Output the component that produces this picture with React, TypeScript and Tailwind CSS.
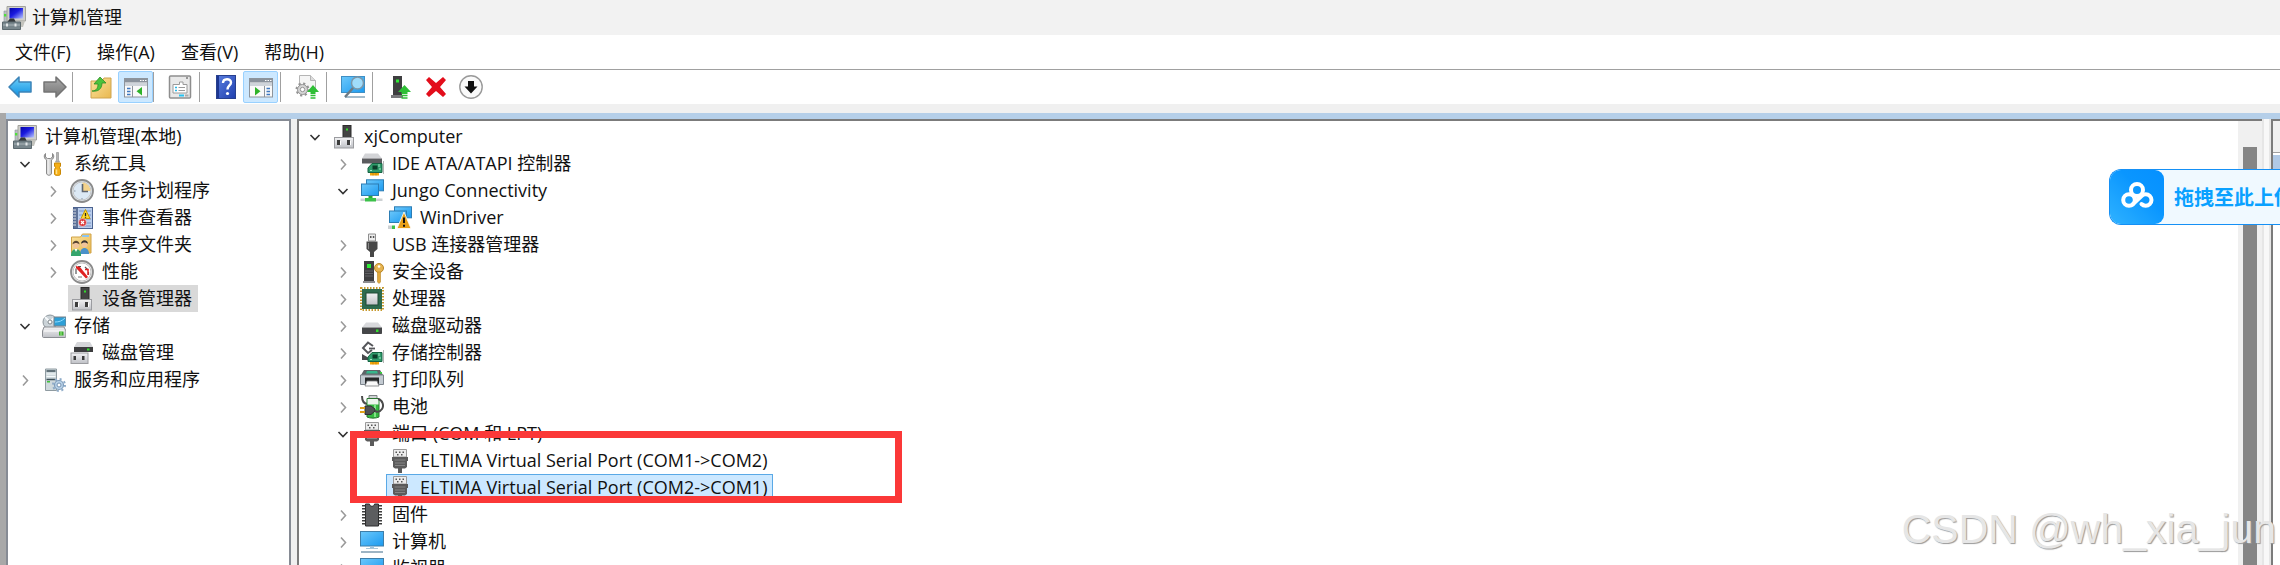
import React, { useState } from "react";

type IconName =
  | "mmc" | "tools" | "clock" | "event" | "shared" | "perf" | "device" | "storage" | "disk" | "services"
  | "ide" | "network" | "netWarn" | "usb" | "security" | "cpu" | "drive" | "storageCtl" | "printer"
  | "battery" | "port" | "firmware" | "monitor"
  | "back" | "forward" | "upFolder" | "paneLeft" | "props" | "help" | "paneRight" | "update"
  | "scan" | "enable" | "remove" | "down";

const GradientDefs = () => (
  <svg width="0" height="0" className="absolute" aria-hidden="true">
    <defs>
      <linearGradient id="screen" x1="0" y1="0" x2="1" y2="1">
        <stop offset="0" stopColor="#6cc8fb" />
        <stop offset="1" stopColor="#1b9af0" />
      </linearGradient>
      <linearGradient id="navy" x1="0" y1="0" x2="1" y2="1">
        <stop offset="0" stopColor="#0505a8" />
        <stop offset="0.45" stopColor="#1a1ae0" />
        <stop offset="1" stopColor="#b9c8ff" />
      </linearGradient>
      <linearGradient id="metal" x1="0" y1="0" x2="1" y2="0">
        <stop offset="0" stopColor="#9a9a9a" />
        <stop offset="0.4" stopColor="#efefef" />
        <stop offset="1" stopColor="#a2a2a2" />
      </linearGradient>
      <linearGradient id="grayBody" x1="0" y1="0" x2="0" y2="1">
        <stop offset="0" stopColor="#f2f2f4" />
        <stop offset="1" stopColor="#bfc1c6" />
      </linearGradient>
      <linearGradient id="folder" x1="0" y1="0" x2="1" y2="1">
        <stop offset="0" stopColor="#fbe3a0" />
        <stop offset="1" stopColor="#e9b84f" />
      </linearGradient>
      <linearGradient id="blueArrow" x1="0" y1="0" x2="0" y2="1">
        <stop offset="0" stopColor="#6fd0fa" />
        <stop offset="1" stopColor="#0d8fe0" />
      </linearGradient>
      <linearGradient id="grayArrow" x1="0" y1="0" x2="0" y2="1">
        <stop offset="0" stopColor="#ababab" />
        <stop offset="1" stopColor="#767676" />
      </linearGradient>
      <linearGradient id="helpBlue" x1="0" y1="0" x2="1" y2="1">
        <stop offset="0" stopColor="#5b7fe0" />
        <stop offset="1" stopColor="#1f3fae" />
      </linearGradient>
      <linearGradient id="cloudTile" x1="0" y1="1" x2="1" y2="0">
        <stop offset="0" stopColor="#2fb2ff" />
        <stop offset="0.6" stopColor="#0a96ff" />
        <stop offset="1" stopColor="#0590ff" />
      </linearGradient>
    </defs>
  </svg>
);

const deviceBase = (
  <>
    <rect x="2.5" y="12.5" width="19" height="10.5" fill="url(#grayBody)" stroke="#9b9ca0" />
    <rect x="5" y="15" width="3" height="5" fill="#3c3c3c" />
    <rect x="15" y="15" width="3" height="5" fill="#3c3c3c" />
    <path d="M8 16h1v4H8zM18 16h1v4h-1z" fill="#fff" />
  </>
);

const greenCard = (
  <>
    <path d="M8 16l4-4.500h10V20.500H8z" fill="#2f9c6b" stroke="#156242" />
    <rect x="12.5" y="13.5" width="5" height="4" fill="#0d3d2b" />
    <path d="M10 18.500h2M19 12v3M19 17h2" stroke="#a4e5c6" />
    <path d="M23.500 9v13" stroke="#b5b5b5" />
    <path d="M10 21h9v2.500h-9z" fill="#f2a50c" />
    <path d="M13 21v2.500M16 21v2.500" stroke="#b87503" strokeWidth="0.6" />
  </>
);

const screens = (
  <>
    <rect x="6.5" y="0.8" width="17" height="11" fill="url(#screen)" stroke="#2c7db4" />
    <rect x="1.5" y="5" width="17" height="11.5" fill="url(#screen)" stroke="#2c7db4" />
  </>
);

const pane = (
  <>
    <rect x="0.5" y="3.5" width="23" height="18.5" fill="#fafafa" stroke="#8d949c" />
    <path d="M1 4h22v3.500H1z" fill="#8a929c" />
    <path d="M16 5.500h1.500M18.500 5.500H20M21 5.500h1.500" stroke="#fff" />
    <path d="M1 8h22v3H1z" fill="#cfd4da" />
  </>
);

const icons: Record<IconName, React.ReactNode> = {
  mmc: (
    <>
      <path d="M2 5h5v12H2z" fill="#b8bec2" stroke="#8c9498" strokeWidth="0.6" />
      <rect x="2" y="8" width="2.5" height="2.5" fill="#4fe03a" />
      <path d="M5 0.500h18.500v14.500H5z" fill="#cfcfcb" stroke="#a2a29c" />
      <path d="M7.500 2h13.500v10.500H7.500z" fill="url(#navy)" />
      <path d="M19 15h4l-2 6h-3z" fill="#c3c3bd" />
      <path d="M5 16.500l3-4h4l2 4z" fill="#33373a" />
      <path d="M0.500 16h18v7.500H0.500z" fill="#78868c" stroke="#5b686e" />
      <path d="M1 19h17" stroke="#a9b4b8" />
      <path d="M4 17.500h2v3H4zM12.500 17.500h2v3h-2z" fill="#e2e6e8" />
    </>
  ),
  tools: (
    <>
      <path d="M3.500 1.500c-2 2-1.500 5 1 6.500V21c0 3 5 3 5 0V8c2.500-1.500 3-4.500 1-6.500V5L8.500 6.500h-3L3.500 5z" fill="url(#metal)" stroke="#8a8a8a" />
      <path d="M14.500 0.500h2V8l1 2h-4l1-2z" fill="#b5b5b5" stroke="#8a8a8a" strokeWidth="0.6" />
      <path d="M12.500 11h6v3l-1 1.500 1 2V22c0 2-6 2-6 0v-4.500l1-2-1-1.500z" fill="#f5ae16" stroke="#c98806" />
      <path d="M14.500 17.500V22" stroke="#ffe08a" strokeWidth="1.5" />
    </>
  ),
  clock: (
    <>
      <circle cx="12" cy="12" r="11" fill="#dfe7ee" stroke="#8b8b8b" strokeWidth="1.8" />
      <circle cx="12" cy="12" r="9" fill="#dce9f5" stroke="#c6c6c6" />
      <path d="M12.500 3.500a8.500 8.500 0 0 1 8 8.500h-8z" fill="#f3d28b" />
      <path d="M12.500 5v7.500H18" fill="none" stroke="#5f6670" strokeWidth="1.6" />
      <path d="M12 19v1.500M4 12h1.500" stroke="#8d99a6" />
    </>
  ),
  event: (
    <>
      <rect x="3.5" y="1.5" width="19" height="21" fill="#b9cdec" stroke="#4b628f" />
      <path d="M4 2h4v20H4z" fill="#5f7399" />
      <path d="M2 4h4M2 7h4M2 10h4M2 13h4M2 16h4M2 19h4" stroke="#dcdfe6" />
      <path d="M9 5h12M9 9h12M9 13h12M9 17h12M9 20h12" stroke="#7c96c4" />
      <path d="M15.500 3.500l4.500 9h-9z" fill="#ffd92e" stroke="#c79a00" />
      <path d="M15.500 7v3M15.500 10.800v1" stroke="#222" strokeWidth="1.3" />
      <circle cx="12.5" cy="16.5" r="4" fill="#db3b3b" stroke="#fff" strokeWidth="0.5" />
      <path d="M11 15l3 3M14 15l-3 3" stroke="#fff" strokeWidth="1.2" />
    </>
  ),
  shared: (
    <>
      <path d="M1.500 4h9l2-3H21v19H1.500z" fill="url(#folder)" stroke="#d0a246" />
      <path d="M12 2h7v2h-7z" fill="#8dc4ee" />
      <circle cx="14.5" cy="11.5" r="3" fill="#f0c49b" />
      <path d="M11 11c0-5 7-5 7 0-2-2-5-2-7 0z" fill="#3b3530" />
      <path d="M10 21c0-8 9-8 9 0z" fill="#4a91c9" />
      <circle cx="6" cy="12" r="3.2" fill="#f0c49b" />
      <path d="M2.500 11.500c0-5 7-5 7 0-2-2-5-2-7 0z" fill="#5b4632" />
      <path d="M1 22c0-8 10-8 10 0v1H1z" fill="#35a56c" />
      <path d="M4.500 16l1.500 3 1.500-3" fill="#fff" />
    </>
  ),
  perf: (
    <>
      <circle cx="12" cy="12" r="11" fill="#f4f4f4" stroke="#8b8b8b" strokeWidth="1.8" />
      <circle cx="12" cy="12" r="9" fill="#fff" stroke="#c0c0c0" />
      <path d="M6 14V8.500M8 6.500h3M15 7l3 3M18.500 12v3" stroke="#555" strokeWidth="1.2" />
      <path d="M6 6l4 1 8 10-2 1.500L6 8z" fill="#e02222" />
      <path d="M15 9.500h3V15" fill="none" stroke="#e02222" strokeWidth="1.5" />
      <path d="M8 17h4" stroke="#777" />
    </>
  ),
  device: (
    <>
      <rect x="11" y="0.5" width="8" height="13" fill="#434343" stroke="#2c2c2c" />
      <rect x="14" y="3.5" width="2" height="2" fill="#33dd2d" />
      {deviceBase}
    </>
  ),
  storage: (
    <>
      <circle cx="8" cy="8" r="7" fill="#cbd3d8" stroke="#8d969c" />
      <path d="M8 8L3 3M8 8l5-5" stroke="#f6f9fb" strokeWidth="2" />
      <circle cx="8" cy="8" r="2" fill="#fff" stroke="#7e868b" />
      <rect x="12" y="3" width="12" height="9" fill="#2e9fd6" stroke="#79828a" />
      <path d="M13 8c4 0 7-1 10-4" stroke="#8fdcff" fill="none" />
      <path d="M2 13h20l2 4v5.500c0 .6-.5 1-1 1H1.500c-.5 0-1-.5-1-1V17z" fill="url(#grayBody)" stroke="#8b8d92" />
      <path d="M2 17h20" stroke="#fff" />
      <rect x="17" y="17.5" width="4.5" height="4" fill="#3fae30" />
      <path d="M19 17.500v4" stroke="#a4f08e" />
    </>
  ),
  disk: (
    <>
      <path d="M7 1h13l3 5H4z" fill="#d5d6d9" />
      <rect x="4" y="6" width="19" height="5" fill="#3d3d3f" />
      <rect x="17" y="7.5" width="2.5" height="2" fill="#33dd2d" />
      <rect x="1" y="12" width="17" height="10.5" fill="url(#grayBody)" stroke="#9b9ca0" />
      <path d="M3.500 15h2.500v4H3.500zM12 15h2.500v4H12z" fill="#3c3c3c" />
    </>
  ),
  services: (
    <>
      <path d="M3.500 1h11v21.500h-11z" fill="#cfd9dd" stroke="#8f9ba1" />
      <path d="M4.500 3h9M4.500 11.500h9" stroke="#3f5058" strokeWidth="1.5" />
      <path d="M4.500 6h9M4.500 8.500h9" stroke="#f7fbfc" strokeWidth="1.2" />
      <rect x="5" y="13" width="3" height="1.5" fill="#3fc23b" />
      <circle cx="17" cy="17" r="4.5" fill="#b8d1e8" stroke="#7f9dbb" strokeWidth="1.2" />
      <circle cx="17" cy="17" r="6" fill="none" stroke="#8eabc8" strokeWidth="2" strokeDasharray="2 2.7" />
      <circle cx="17" cy="17" r="2" fill="#fff" stroke="#7391af" />
    </>
  ),
  ide: (
    <>
      <path d="M5 1.500h13l4 5H2z" fill="#d3d4d7" />
      <path d="M2 6.500h20v5H2z" fill="#5a5b5e" />
      {greenCard}
    </>
  ),
  network: (
    <>
      {screens}
      <path d="M8.500 17h4v3h-4z" fill="#2aa839" />
      <path d="M5 19h11v3.500H5z" fill="#3cc14a" />
      <path d="M0.500 19.500H5V22H0.500zM16 19.500h6.500V22H16z" fill="#cdd1d3" />
    </>
  ),
  netWarn: (
    <>
      {screens}
      <path d="M0 19.500h4V23H0z" fill="#cdd1d3" />
      <path d="M4 19.500h3V23H4z" fill="#3cc14a" />
      <path d="M16 6l7 16.500H9z" fill="#e9a11b" stroke="#fff" strokeWidth="0.8" />
      <path d="M16 11.500v5.500M16 18.700v2" stroke="#111" strokeWidth="2" />
    </>
  ),
  usb: (
    <>
      <path d="M8.500 1h7v7h-7z" fill="#ececec" stroke="#8f8f8f" />
      <path d="M10 3h1.500v2H10zM12.800 3h1.500v2h-1.500z" fill="#555" />
      <path d="M6.500 8.500h11v7.500l-3.500 3v5h-4v-5l-3.500-3z" fill="#474747" />
      <path d="M8.500 10v6" stroke="#8a8a8a" />
    </>
  ),
  security: (
    <>
      <path d="M4 1h10v20H4z" fill="#3e3e40" />
      <rect x="7" y="4" width="4" height="4" fill="#2eea35" />
      <path d="M5 11h8M5 13.500h8M5 16h8" stroke="#626266" />
      <path d="M3 21h12v2H3z" fill="#8c8c8f" />
      <circle cx="19" cy="8" r="4.5" fill="#e6b451" stroke="#b98626" />
      <circle cx="19" cy="6.5" r="1.3" fill="#fff" />
      <path d="M17.500 12h3v10L19 23.500 17.500 22z" fill="#e0a83c" stroke="#b98626" strokeWidth="0.6" />
    </>
  ),
  cpu: (
    <>
      <rect x="1" y="1" width="22" height="22" fill="none" stroke="#c79a2f" strokeWidth="2" strokeDasharray="1.5 1.5" />
      <rect x="2" y="2" width="20" height="20" fill="#2e6b4f" />
      <rect x="6" y="6" width="12" height="12" fill="url(#grayBody)" stroke="#1e4a36" />
    </>
  ),
  drive: (
    <>
      <path d="M6 8.500h12l4 5H2z" fill="#d8d9dc" />
      <path d="M2 13.500h20V19c0 .6-.4 1-1 1H3c-.6 0-1-.4-1-1z" fill="#454648" />
      <rect x="16" y="15.5" width="2.5" height="2.5" fill="#33e02d" />
    </>
  ),
  storageCtl: (
    <>
      <path d="M13 5L8 1.500 3 7l5 5 4-3" fill="none" stroke="#55565a" strokeWidth="2" />
      <path d="M9 7.500h6" stroke="#55565a" strokeWidth="1.8" />
      <path d="M2 13l7 4v2H2z" fill="#47484b" />
      {greenCard}
    </>
  ),
  printer: (
    <>
      <path d="M4 2h16l3 5H1z" fill="#5e6468" />
      <path d="M7 3h10l1 2.500H6z" fill="#36b58c" />
      <path d="M0.500 7h23v9.500h-23z" fill="#c3cad1" stroke="#7c848c" />
      <path d="M5 9.500h14V16H5z" fill="#26282a" />
      <path d="M7 13h10l2 5H5z" fill="#fafafa" stroke="#77797c" strokeWidth="0.8" />
      <rect x="20" y="4" width="2" height="1.5" fill="#35e035" />
    </>
  ),
  battery: (
    <>
      <path d="M2 1c0 5 2 8 6 8" fill="none" stroke="#4b4b4b" strokeWidth="2" />
      <path d="M9 0.500h8v3H9z" fill="#cfd2d4" stroke="#7d8184" />
      <path d="M7 3.500h12V22c-3 1.500-9 1.500-12 0z" fill="#34b93f" stroke="#2a7430" />
      <path d="M7.500 4h11v5.500h-11z" fill="#eef6ee" />
      <path d="M15 10v12" stroke="#9df0a0" strokeWidth="1.5" />
      <path d="M18 4c5 1 6 7 4 10-2 3-5 3-7 2" fill="none" stroke="#4b4b4b" strokeWidth="2" />
      <path d="M5 11h6l4 3v2l-4 3.500H5z" fill="#505254" stroke="#2f3031" />
      <path d="M0 13h5M0 17h5" stroke="#dfa21b" strokeWidth="1.8" />
    </>
  ),
  port: (
    <>
      <path d="M5.500 0.500h13V8h-13z" fill="#ededed" stroke="#9a9a9a" />
      <path d="M7.500 2.500H9V4H7.500zM11 2.500h1.500V4H11zM14.500 2.500H16V4h-1.500zM9 5h1.500v1.500H9zM13 5h1.500v1.500H13z" fill="#555" />
      <path d="M4 8h16v4h-1v6l-2 1.500h-3V24h-4v-4.500H7L5 18v-6H4z" fill="#5b5b5b" />
      <path d="M6.500 11h11M7 14h10M7 16.500h10" stroke="#858585" />
    </>
  ),
  firmware: (
    <>
      <path d="M3.500 2v20M20.500 2v20" stroke="#3d3d3d" strokeWidth="3" strokeDasharray="1.5 1.5" />
      <path d="M5.500 1h4c0 3 5 3 5 0h4v22h-13z" fill="#5c5d5f" stroke="#2d2d2e" />
    </>
  ),
  monitor: (
    <>
      <rect x="0.5" y="1.5" width="23" height="14.5" fill="url(#screen)" stroke="#3f7ea8" />
      <path d="M10 16.500h4v2h-4z" fill="#9cc3de" />
      <path d="M6 18.500h12" stroke="#a9c6d8" />
      <path d="M1 22h22" stroke="#9db4c4" strokeWidth="2" />
    </>
  ),
  back: (
    <path d="M1 12L11 2v5h12v10H11v5z" fill="url(#blueArrow)" stroke="#3c84b8" strokeWidth="1.5" strokeLinejoin="round" />
  ),
  forward: (
    <path d="M23 12L13 2v5H1v10h12v5z" fill="url(#grayArrow)" stroke="#747474" strokeWidth="1.5" strokeLinejoin="round" />
  ),
  upFolder: (
    <>
      <path d="M2 6h11l2-3h7v20H2z" fill="url(#folder)" stroke="#cfa450" />
      <path d="M3 16c5 0 6-4 6-7H5l6-7 6 6h-4c0 6-4 9-10 8z" fill="#4cc23c" stroke="#2f8f26" strokeWidth="0.8" />
    </>
  ),
  paneLeft: (
    <>
      {pane}
      <path d="M8.500 11v11" stroke="#8d949c" />
      <path d="M3 13.500h3.500M3 16.500h3.500M3 19.500h3.500" stroke="#3f78c0" strokeWidth="1.3" />
      <path d="M18 12v8.500l-5.500-4.200z" fill="#2fb32a" />
    </>
  ),
  props: (
    <>
      <rect x="1.5" y="1" width="21" height="22" rx="1" fill="#e9e9e9" stroke="#8e8e8e" strokeWidth="1.5" />
      <path d="M18 3h2" stroke="#444" />
      <path d="M5 9.500V18h14V9.500h-4V7h-3.500v2.500z" fill="#fff" stroke="#9a9a9a" />
      <path d="M7 12.500h2M7 15.500h2" stroke="#26b7e8" strokeWidth="1.5" />
      <path d="M10.500 12.500H17M10.500 15.500H17" stroke="#9a9a9a" />
      <path d="M11 20.500h5" stroke="#27c3f0" strokeWidth="2" />
      <path d="M17 20.500h3.500" stroke="#aaa" strokeWidth="2" />
    </>
  ),
  help: (
    <>
      <rect x="2.5" y="0.5" width="19" height="23" fill="url(#helpBlue)" stroke="#27408f" />
      <path d="M4 1v22" stroke="#1c3690" strokeWidth="2" />
      <path d="M9 8c0-5 8-5 8-.5 0 3-3.500 3-3.500 7" fill="none" stroke="#fff" strokeWidth="2.4" />
      <circle cx="13.5" cy="18.5" r="1.6" fill="#fff" />
    </>
  ),
  paneRight: (
    <>
      {pane}
      <path d="M15.500 11v11" stroke="#8d949c" />
      <path d="M17.500 13.500H21M17.500 16.500H21M17.500 19.500H21" stroke="#3f78c0" strokeWidth="1.3" />
      <path d="M6 12v8.500l5.500-4.200z" fill="#2fb32a" />
    </>
  ),
  update: (
    <>
      <path d="M4.500 0.500h11l5 5V15H4.500z" fill="#f5f5f5" stroke="#b5b5b5" />
      <path d="M15.500 0.500v5h5" fill="#ddd" stroke="#b5b5b5" />
      <circle cx="7.5" cy="14.5" r="5" fill="#d5d5d5" stroke="#949494" />
      <circle cx="7.5" cy="14.5" r="6" fill="none" stroke="#949494" strokeWidth="2" strokeDasharray="2.2 2.5" />
      <circle cx="7.5" cy="14.5" r="2.2" fill="#fff" stroke="#949494" />
      <path d="M18 10l6 7h-3.500v2h-5v-2H12z" fill="#2fbf36" />
      <path d="M15.500 20.500h5M15.500 23h5" stroke="#2fbf36" strokeWidth="1.6" />
    </>
  ),
  scan: (
    <>
      <rect x="0.5" y="1.5" width="23" height="16" fill="url(#screen)" stroke="#3f8fc4" />
      <path d="M4 22h20" stroke="#a5bccb" strokeWidth="2" />
      <circle cx="16.5" cy="8" r="6" fill="#9fdcfb" stroke="#7d97a8" strokeWidth="1.5" />
      <path d="M12 13L4 22" stroke="#6d7b85" strokeWidth="2.5" />
    </>
  ),
  enable: (
    <>
      <path d="M4 1h9v19H4z" fill="#3e3e40" />
      <rect x="7" y="4.5" width="3" height="3" fill="#2eea35" />
      <path d="M2 20h12v3H2z" fill="#77777a" />
      <path d="M15.500 10l6.500 7h-3.500v2h-6v-2H9z" fill="#2fbf36" />
      <path d="M12.500 20.500h6M12.500 23h6" stroke="#2fbf36" strokeWidth="1.6" />
    </>
  ),
  remove: <path d="M2 5l3-3 7 6 7-6 3 3-6 7 6 7-3 3-7-6-7 6-3-3 6-7z" fill="#e30d1b" />,
  down: (
    <>
      <circle cx="12" cy="12" r="11.2" fill="#fafafa" stroke="#9a9a9a" strokeWidth="1.4" />
      <path d="M9 6h6v5.500h3.500L12 18.500 5.500 11.500H9z" fill="#111" />
    </>
  ),
};

const Icon = ({ name }: { name: IconName }) => (
  <svg viewBox="0 0 24 24" className="h-6 w-6 shrink-0" aria-hidden="true">
    {icons[name]}
  </svg>
);

interface TreeRow {
  label: string;
  icon: IconName;
  level: number;
  state?: "open" | "closed";
  selected?: "gray" | "blue";
}

const consoleTree: TreeRow[] = [
  { label: "计算机管理(本地)", icon: "mmc", level: 0 },
  { label: "系统工具", icon: "tools", level: 1, state: "open" },
  { label: "任务计划程序", icon: "clock", level: 2, state: "closed" },
  { label: "事件查看器", icon: "event", level: 2, state: "closed" },
  { label: "共享文件夹", icon: "shared", level: 2, state: "closed" },
  { label: "性能", icon: "perf", level: 2, state: "closed" },
  { label: "设备管理器", icon: "device", level: 2, selected: "gray" },
  { label: "存储", icon: "storage", level: 1, state: "open" },
  { label: "磁盘管理", icon: "disk", level: 2 },
  { label: "服务和应用程序", icon: "services", level: 1, state: "closed" },
];

const deviceTree: TreeRow[] = [
  { label: "xjComputer", icon: "device", level: 1, state: "open" },
  { label: "IDE ATA/ATAPI 控制器", icon: "ide", level: 2, state: "closed" },
  { label: "Jungo Connectivity", icon: "network", level: 2, state: "open" },
  { label: "WinDriver", icon: "netWarn", level: 3 },
  { label: "USB 连接器管理器", icon: "usb", level: 2, state: "closed" },
  { label: "安全设备", icon: "security", level: 2, state: "closed" },
  { label: "处理器", icon: "cpu", level: 2, state: "closed" },
  { label: "磁盘驱动器", icon: "drive", level: 2, state: "closed" },
  { label: "存储控制器", icon: "storageCtl", level: 2, state: "closed" },
  { label: "打印队列", icon: "printer", level: 2, state: "closed" },
  { label: "电池", icon: "battery", level: 2, state: "closed" },
  { label: "端口 (COM 和 LPT)", icon: "port", level: 2, state: "open" },
  { label: "ELTIMA Virtual Serial Port (COM1->COM2)", icon: "port", level: 3 },
  { label: "ELTIMA Virtual Serial Port (COM2->COM1)", icon: "port", level: 3, selected: "blue" },
  { label: "固件", icon: "firmware", level: 2, state: "closed" },
  { label: "计算机", icon: "monitor", level: 2, state: "closed" },
  { label: "监视器", icon: "monitor", level: 2, state: "closed" },
];

const indents = ["-ml-[25px]", "ml-1", "ml-8", "ml-15"];

const Chevron = ({ open }: { open: boolean }) => (
  <svg viewBox="0 0 22 22" className="h-[22px] w-[22px]" fill="none" strokeWidth="1.6" aria-hidden="true">
    {open ? <path d="M6.500 9l4.500 4.500L15.500 9" stroke="#333" /> : <path d="M9 6.500l4.500 5L9 16.500" stroke="#9a9a9a" />}
  </svg>
);

const Tree = ({ rows, name }: { rows: TreeRow[]; name: string }) => {
  const [selected, setSelected] = useState(rows.findIndex((row) => row.selected));
  const tint = rows.find((row) => row.selected)?.selected;
  const selectedStyle = tint === "blue" ? "bg-[#cce8ff] outline -outline-offset-1 outline-[#5aa9e6]" : "bg-[#d9d9d9]";

  return (
    <ul aria-label={name}>
      {rows.map((row, index) => (
        <li key={row.label} className={`flex h-[27px] items-center ${indents[row.level]}`}>
          {row.state ? (
            <button aria-label={row.label} aria-expanded={row.state === "open"} className="mr-1 w-[22px] shrink-0">
              <Chevron open={row.state === "open"} />
            </button>
          ) : (
            <span className="mr-1 w-[22px] shrink-0" />
          )}
          <button
            onClick={() => setSelected(index)}
            className={`flex h-[27px] items-center gap-2 whitespace-nowrap pl-0.5 pr-1.5 ${index === selected ? selectedStyle : ""}`}
          >
            <Icon name={row.icon} />
            <span>{row.label}</span>
          </button>
        </li>
      ))}
    </ul>
  );
};

const menus = ["文件(F)", "操作(A)", "查看(V)", "帮助(H)"];

const ToolButton = ({ icon, label, active }: { icon: IconName; label: string; active?: boolean }) => (
  <button
    aria-label={label}
    className={`flex h-8 w-[35px] items-center justify-center ${active ? "rounded-xs border border-[#99d1ff] bg-[#cce8ff]" : ""}`}
  >
    <Icon name={icon} />
  </button>
);

const Divider = () => <div className="h-[30px] w-px bg-[#a0a0a0]" />;

const UploadDrop = () => (
  <button className="absolute right-0 top-[169px] flex h-14 w-[171px] items-center overflow-hidden rounded-l-xl border-y border-l border-[#1590f5] bg-[#f0f9ff] text-[#0aa1ff]">
    <svg viewBox="0 0 54 54" className="h-full w-[54px] shrink-0" aria-hidden="true">
      <rect width="54" height="54" rx="9" fill="url(#cloudTile)" />
      <g fill="none" stroke="#fff" strokeWidth="4" strokeLinecap="round">
        <circle cx="27" cy="20" r="6" />
        <circle cx="19" cy="30" r="5.8" />
        <path d="M22.500 34.500l9-8.500a5.800 5.800 0 1 1 0 8" />
      </g>
    </svg>
    <span className="whitespace-nowrap pl-2.5 text-[20px] font-bold">拖拽至此上传</span>
  </button>
);

export default function App() {
  return (
    <div className="relative flex h-screen flex-col overflow-hidden bg-[#f0f0f0] font-['Open_Sans','Noto_Sans_CJK_SC',sans-serif] text-[18px] leading-[27px] text-[#111]">
      <GradientDefs />
      <header className="flex h-[35px] shrink-0 items-center gap-1.5 bg-[#f2f2f2] pl-0.5">
        <Icon name="mmc" />
        <h1>计算机管理</h1>
      </header>

      <nav className="flex h-[35px] shrink-0 items-center gap-[26px] border-b border-[#a0a0a0] bg-white pl-[15px]">
        {menus.map((menu) => (
          <button key={menu}>{menu}</button>
        ))}
      </nav>

      <div className="flex h-[34px] shrink-0 items-center bg-white pl-0.5">
        <ToolButton icon="back" label="后退" />
        <ToolButton icon="forward" label="前进" />
        <Divider />
        <div className="flex pl-2.5">
          <ToolButton icon="upFolder" label="上移" />
          <ToolButton icon="paneLeft" label="显示/隐藏控制台树" active />
        </div>
        <Divider />
        <div className="flex pl-2 pr-0.5">
          <ToolButton icon="props" label="属性" />
        </div>
        <Divider />
        <div className="flex pl-2 pr-0.5">
          <ToolButton icon="help" label="帮助" />
          <ToolButton icon="paneRight" label="显示/隐藏操作窗格" active />
        </div>
        <Divider />
        <div className="flex pl-2 pr-0.5">
          <ToolButton icon="update" label="更新驱动程序" />
        </div>
        <Divider />
        <div className="flex pl-2 pr-0.5">
          <ToolButton icon="scan" label="扫描检测硬件改动" />
        </div>
        <Divider />
        <div className="flex pl-2.5">
          <ToolButton icon="enable" label="启用设备" />
          <ToolButton icon="remove" label="卸载设备" />
          <ToolButton icon="down" label="禁用设备" />
        </div>
      </div>

      <main className="mt-[9px] flex min-h-0 flex-1 border-l-[6px] border-[#a8a8a8]">
        <div className="flex min-w-0 flex-1 border-t-[6px] border-[#b5cfe9]">
          <section className="w-[285px] shrink-0 overflow-hidden border-2 border-b-0 border-[#868b94] bg-white pl-0.5 pt-0.5">
            <Tree rows={consoleTree} name="控制台树" />
          </section>

          <section className="ml-1.5 flex min-w-0 flex-1 border-l-2 border-t-2 border-[#7b7b7b] bg-white">
            <div className="relative min-w-0 flex-1 overflow-hidden pl-px pt-0.5">
              <Tree rows={deviceTree} name="设备" />
              <div className="pointer-events-none absolute left-[51px] top-[310px] h-[72px] w-[552px] border-[7px] border-[#fb3838]" />
            </div>
            <div className="flex w-6 shrink-0 justify-center bg-[#f0f0f0] pt-[26px]">
              <div className="w-3.5 bg-[#858585]" />
            </div>
          </section>

          <div className="w-[9px] shrink-0 border-x-2 border-[#e6e6e6] bg-[#f8f8f8]" />

          <aside className="w-[9px] shrink-0 border-l-2 border-t-2 border-[#7b7b7b] bg-white">
            <div className="h-8 border-b border-[#a0a0a0] bg-[#f0f0f0]" />
            <div className="mt-0.5 h-7 bg-[#b0c9e6]" />
          </aside>
        </div>
      </main>

      <UploadDrop />

      <div className="pointer-events-none absolute bottom-3 right-1 whitespace-nowrap font-['Liberation_Sans',sans-serif] text-[41px] leading-[48px] text-[#e6e6e6] [text-shadow:1px_1px_1px_#999]">
        CSDN @wh_xia_jun
      </div>
    </div>
  );
}
